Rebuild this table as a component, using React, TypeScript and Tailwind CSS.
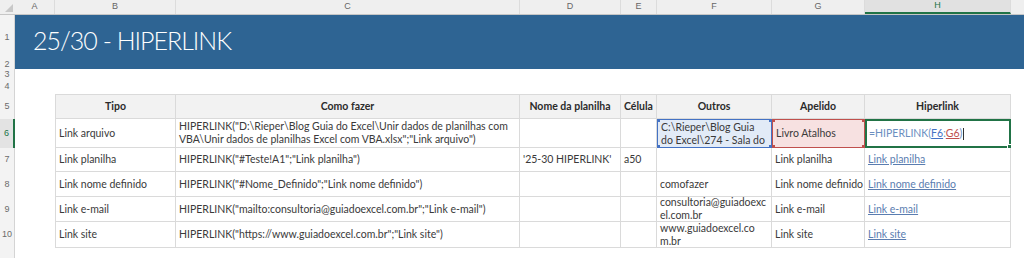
import React from "react";

const W = [15, 40, 121, 344, 101, 36, 115, 93, 146, 13];
const letters = ["", "A", "B", "C", "D", "E", "F", "G", "H", ""];

const body = "font-['Lato','Noto_Sans',sans-serif] text-[10.5px] text-[#3a3a3a]";

function RowNum({ n, h, active }: { n: string; h: number; active?: boolean }) {
  return (
    <div
      className={`flex w-[15px] shrink-0 items-center justify-center border-r text-[9px] text-[#6b6b6b] font-['Liberation_Sans',sans-serif] ${
        active ? "border-r-2 border-[#217346] bg-[#e3e3e3] text-[#217346]" : "border-[#d4d4d4] bg-[#f3f3f3]"
      }`}
      style={{ height: h }}
    >
      {n}
    </div>
  );
}

function Cell({
  w,
  children,
  first,
  head,
  center,
  extra = "",
}: {
  w: number;
  children?: React.ReactNode;
  first?: boolean;
  head?: boolean;
  center?: boolean;
  extra?: string;
}) {
  return (
    <div
      className={`relative flex h-full shrink-0 items-center overflow-hidden border-b border-r border-[#dadada] px-[3px] leading-[13px] ${
        first ? "border-l" : ""
      } ${head ? "border-t bg-[#f2f2f2] font-bold justify-center text-[#2b2b2b]" : ""} ${center ? "justify-center" : ""} ${extra}`}
      style={{ width: w }}
    >
      {children}
    </div>
  );
}

function Dot({ pos, color }: { pos: string; color: string }) {
  return <span className={`absolute h-[4px] w-[4px] ${pos} ${color}`} />;
}

function TableRow({
  n,
  h,
  cells,
  active,
}: {
  n: string;
  h: number;
  cells: React.ReactNode;
  active?: boolean;
}) {
  return (
    <div className="flex" style={{ height: h }}>
      <RowNum n={n} h={h} active={active} />
      <div className="w-[40px] shrink-0" />
      <div className={`flex h-full ${body}`}>{cells}</div>
    </div>
  );
}

const Link = ({ children }: { children: React.ReactNode }) => (
  <span className="whitespace-nowrap text-[#5a7db0] underline decoration-[#5a7db0]">{children}</span>
);

export default function App() {
  return (
    <div className="h-[258px] w-[1024px] overflow-hidden bg-white">
      {/* column headers */}
      <div className="flex h-[15px] border-b border-[#c6c6c6] bg-[#efefef] font-['Liberation_Sans',sans-serif] text-[9px] text-[#666]">
        {W.map((w, i) => (
          <div
            key={i}
            className={`relative flex shrink-0 items-center justify-center ${
              i > 0 && i < 9 ? "border-r border-[#dcdcdc]" : ""
            } ${i === 8 ? "bg-[#e1e1e1] text-[#217346] border-b-2 border-b-[#217346]" : ""}`}
            style={{ width: w }}
          >
            {i === 0 ? (
              <svg width="8" height="8" viewBox="0 0 8 8" className="absolute right-[2px] bottom-[2px]">
                <polygon points="8,0 8,8 0,8" fill="#c8c8c8" />
              </svg>
            ) : (
              letters[i]
            )}
          </div>
        ))}
      </div>

      {/* rows 1-2 title band */}
      <div className="flex h-[54px]">
        <div className="flex w-[15px] shrink-0 flex-col border-r border-[#d4d4d4] bg-[#f3f3f3] text-[9px] text-[#6b6b6b] font-['Liberation_Sans',sans-serif]">
          <div className="flex h-[45px] items-center justify-center">1</div>
          <div className="flex h-[9px] items-end justify-center leading-[9px]">2</div>
        </div>
        <div className="flex flex-1 items-start bg-[#2e6493] pl-[18px] pt-[10px]">
          <span className="font-['Lato',sans-serif] text-[25px] font-light leading-[30px] tracking-[-1px] text-white">
            25/30 - HIPERLINK
          </span>
        </div>
      </div>

      {/* rows 3-4 */}
      <div className="flex h-[11px]">
        <RowNum n="3" h={11} />
      </div>
      <div className="flex h-[14px]">
        <RowNum n="4" h={14} />
      </div>

      {/* header row 5 */}
      <TableRow
        n="5"
        h={25}
        cells={
          <>
            <Cell w={121} first head>Tipo</Cell>
            <Cell w={344} head>Como fazer</Cell>
            <Cell w={101} head>Nome da planilha</Cell>
            <Cell w={36} head>Célula</Cell>
            <Cell w={115} head>Outros</Cell>
            <Cell w={93} head>Apelido</Cell>
            <Cell w={146} head>Hiperlink</Cell>
          </>
        }
      />

      {/* row 6 */}
      <TableRow
        n="6"
        h={29}
        active
        cells={
          <>
            <Cell w={121} first>Link arquivo</Cell>
            <Cell w={344}>
              <span className="whitespace-nowrap">
                HIPERLINK("D:\Rieper\Blog Guia do Excel\Unir dados de planilhas com
                <br />
                VBA\Unir dados de planilhas Excel com VBA.xlsx";"Link arquivo")
              </span>
            </Cell>
            <Cell w={101} />
            <Cell w={36} />
            <Cell w={115} extra="!border !border-[#4472c4] bg-[#e2ebf7] !items-start pt-[1px]">
              <span className="whitespace-nowrap">
                C:\Rieper\Blog Guia
                <br />
                do Excel\274 - Sala do
              </span>
              <Dot pos="-left-[2px] -top-[2px]" color="bg-[#4472c4]" />
              <Dot pos="-right-[2px] -top-[2px]" color="bg-[#4472c4]" />
              <Dot pos="-left-[2px] -bottom-[2px]" color="bg-[#4472c4]" />
              <Dot pos="-right-[2px] -bottom-[2px]" color="bg-[#4472c4]" />
            </Cell>
            <Cell w={93} extra="!border !border-[#c0504d] bg-[#f7e1e1]">
              Livro Atalhos
              <Dot pos="-left-[2px] -top-[2px]" color="bg-[#c0504d]" />
              <Dot pos="-right-[2px] -top-[2px]" color="bg-[#c0504d]" />
              <Dot pos="-left-[2px] -bottom-[2px]" color="bg-[#c0504d]" />
              <Dot pos="-right-[2px] -bottom-[2px]" color="bg-[#c0504d]" />
            </Cell>
            <div className="relative flex h-full w-[146px] shrink-0 items-center border-2 border-[#217346] px-[2px]">
              <span className="text-[#6b8fbf]">=HIPERLINK(</span>
              <span className="text-[#4472c4] underline">F6</span>
              <span className="text-[#6b8fbf]">:</span>
              <span className="text-[#c0504d] underline">G6</span>
              <span className="text-[#6b8fbf]">)</span>
              <span className="ml-[1px] h-[12px] w-[1px] bg-[#333]" />
              <span className="absolute -bottom-[3px] -right-[3px] h-[5px] w-[5px] border border-white bg-[#217346]" />
            </div>
          </>
        }
      />

      {/* row 7 */}
      <TableRow
        n="7"
        h={24}
        cells={
          <>
            <Cell w={121} first>Link planilha</Cell>
            <Cell w={344}>HIPERLINK("#Teste!A1";"Link planilha")</Cell>
            <Cell w={101}><span className="whitespace-nowrap">'25-30 HIPERLINK'</span></Cell>
            <Cell w={36}>a50</Cell>
            <Cell w={115} />
            <Cell w={93}>Link planilha</Cell>
            <Cell w={146}><Link>Link planilha</Link></Cell>
          </>
        }
      />

      {/* row 8 */}
      <TableRow
        n="8"
        h={25}
        cells={
          <>
            <Cell w={121} first>Link nome definido</Cell>
            <Cell w={344}>HIPERLINK("#Nome_Definido";"Link nome definido")</Cell>
            <Cell w={101} />
            <Cell w={36} />
            <Cell w={115}>comofazer</Cell>
            <Cell w={93}><span className="whitespace-nowrap">Link nome definido</span></Cell>
            <Cell w={146}><Link>Link nome definido</Link></Cell>
          </>
        }
      />

      {/* row 9 */}
      <TableRow
        n="9"
        h={25}
        cells={
          <>
            <Cell w={121} first>Link e-mail</Cell>
            <Cell w={344}>HIPERLINK("mailto:consultoria@guiadoexcel.com.br";"Link e-mail")</Cell>
            <Cell w={101} />
            <Cell w={36} />
            <Cell w={115}>
              <span className="whitespace-nowrap">
                consultoria@guiadoexc
                <br />
                el.com.br
              </span>
            </Cell>
            <Cell w={93}>Link e-mail</Cell>
            <Cell w={146}><Link>Link e-mail</Link></Cell>
          </>
        }
      />

      {/* row 10 */}
      <TableRow
        n="10"
        h={26}
        cells={
          <>
            <Cell w={121} first>Link site</Cell>
            <Cell w={344}>HIPERLINK("https://www.guiadoexcel.com.br";"Link site")</Cell>
            <Cell w={101} />
            <Cell w={36} />
            <Cell w={115}>
              <span className="whitespace-nowrap">
                www.guiadoexcel.co
                <br />
                m.br
              </span>
            </Cell>
            <Cell w={93}>Link site</Cell>
            <Cell w={146}><Link>Link site</Link></Cell>
          </>
        }
      />

      {/* row 11 partial */}
      <div className="flex h-[10px]">
        <RowNum n="" h={10} />
      </div>
    </div>
  );
}
